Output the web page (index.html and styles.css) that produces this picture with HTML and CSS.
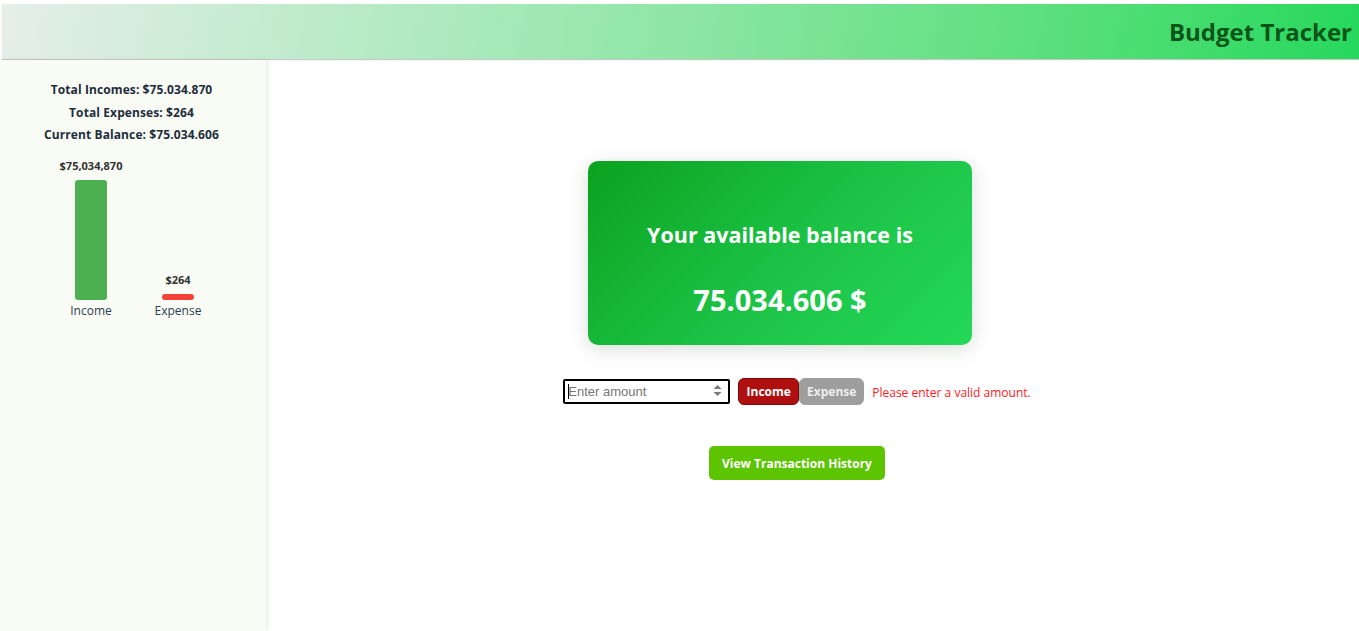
FILE: index.html
```html
<!DOCTYPE html>
<html lang="en">
<head>
<meta charset="utf-8">
<title>Budget Tracker</title>
<link rel="stylesheet" href="styles.css">
</head>
<body>
<header class="topbar">
  <h1 class="brand">Budget Tracker</h1>
</header>
<div class="layout">
  <aside class="sidebar">
    <div class="totals">
      <p>Total Incomes: $75.034.870</p>
      <p>Total Expenses: $264</p>
      <p>Current Balance: $75.034.606</p>
    </div>
    <div class="chart">
      <div class="col">
        <span class="val">$75,034,870</span>
        <div class="bar bar-income"></div>
        <span class="name">Income</span>
      </div>
      <div class="col">
        <span class="val">$264</span>
        <div class="bar bar-expense"></div>
        <span class="name">Expense</span>
      </div>
    </div>
  </aside>
  <main class="main">
    <section class="card">
      <h2 class="card-title">Your available balance is</h2>
      <p class="card-amount">75.034.606 $</p>
    </section>
    <div class="entry">
      <div class="field">
        <input class="amount" type="number" placeholder="Enter amount">
        <span class="caret"></span>
        <svg class="spin" width="9" height="13" viewBox="0 0 9 13" aria-hidden="true">
          <path d="M4.5 1 L8.5 5 L0.5 5 Z" fill="#7a7a7a"/>
          <path d="M0.5 8 L8.5 8 L4.5 12 Z" fill="#7a7a7a"/>
        </svg>
      </div>
      <div class="toggle">
        <button class="btn btn-income">Income</button>
        <button class="btn btn-expense">Expense</button>
      </div>
      <span class="error">Please enter a valid amount.</span>
    </div>
    <button class="history">View Transaction History</button>
  </main>
</div>
</body>
</html>
```
FILE: styles.css
```css
* { box-sizing: border-box; }
html, body { margin: 0; padding: 0; }
body {
  font-family: "Open Sans", "Noto Sans", sans-serif;
  background: #fff;
  overflow: hidden;
  height: 631px;
}
.topbar {
  margin: 4px 0 0 2px;
  height: 55px;
  background: linear-gradient(100deg, #e6eee9 0%, #a9e9bb 35%, #5fe07f 75%, #26d85c 100%);
  box-shadow: 0 1px 1px rgba(0,0,0,0.22);
  display: flex;
  align-items: center;
  justify-content: flex-end;
  padding-right: 7px;
}
.brand {
  margin: 0;
  font-size: 24px;
  font-weight: 700;
  color: #0b5519;
  line-height: 30px;
}
.layout {
  display: flex;
  height: 571px;
  margin-top: 1px;
}
.sidebar {
  width: 266px;
  flex: none;
  background: #f9fcf5;
  box-shadow: 2px 0 4px rgba(0,0,0,0.08);
  padding-top: 19px;
  position: relative;
  z-index: 1;
}
.totals { text-align: center; padding-right: 3px; }
.totals p {
  margin: 0;
  font-size: 12px;
  font-weight: 700;
  line-height: 22.5px;
  color: #1f2d3d;
  letter-spacing: 0.1px;
}
.chart {
  display: flex;
  justify-content: center;
  align-items: flex-end;
  gap: 23px;
  margin-top: 12px;
  padding-left: 3px;
}
.col {
  width: 64px;
  display: flex;
  flex-direction: column;
  align-items: center;
}
.val {
  font-size: 11px;
  font-weight: 700;
  line-height: 14px;
  color: #333;
  margin-bottom: 7px;
  white-space: nowrap;
}
.bar { width: 32px; border-radius: 3px; }
.bar-income { height: 120px; background: #4caf50; }
.bar-expense { height: 6px; background: #f44336; }
.name {
  font-size: 12px;
  line-height: 16px;
  color: #2c3e50;
  margin-top: 3px;
}
.main {
  flex: 1;
  display: flex;
  flex-direction: column;
  align-items: center;
  padding-top: 101px;
  padding-right: 31px;
}
.card {
  width: 384px;
  height: 184px;
  margin-right: 34px;
  border-radius: 10px;
  background: linear-gradient(135deg, #0ca21f 0%, #1bc144 50%, #24d858 100%);
  box-shadow: 0 4px 20px rgba(40,80,40,0.18);
  text-align: center;
  color: #fff;
  padding-top: 60px;
}
.card-title {
  margin: 0;
  font-size: 21.5px;
  font-weight: 700;
  line-height: 28px;
}
.card-amount {
  margin: 33px 0 0;
  font-size: 29px;
  font-weight: 700;
  line-height: 36px;
}
.entry {
  display: flex;
  align-items: center;
  margin-top: 33px;
  height: 27px;
}
.field {
  position: relative;
  margin-right: 8px;
}
.amount {
  display: block;
  width: 167px;
  height: 25px;
  border: 2px solid #000;
  border-radius: 2px;
  padding: 0 3px;
  font-family: "Liberation Sans", Arial, sans-serif;
  font-size: 13px;
  outline: none;
  background: #fff;
  -moz-appearance: textfield;
}
.amount::-webkit-inner-spin-button,
.amount::-webkit-outer-spin-button { -webkit-appearance: none; margin: 0; }
.amount::placeholder { color: #757575; }
.caret {
  position: absolute;
  left: 5px;
  top: 5px;
  width: 1px;
  height: 15px;
  background: #000;
}
.spin {
  position: absolute;
  right: 8px;
  top: 5px;
}
.toggle { display: flex; }
.btn {
  height: 27px;
  border-radius: 6px;
  font-family: "Open Sans", sans-serif;
  font-size: 12px;
  font-weight: 700;
  padding: 0;
  cursor: pointer;
}
.btn-income {
  width: 61px;
  background: #b00f0f;
  color: #fff;
  border: 1px solid #7d0a0a;
}
.btn-expense {
  width: 65px;
  background: #9e9e9e;
  color: #eeeeee;
  border: 1px solid #9e9e9e;
}
.error {
  margin-left: 8px;
  font-size: 12px;
  color: #ff1a1a;
  white-space: nowrap;
  padding-top: 2px;
}
.history {
  margin-top: 41px;
  width: 176px;
  height: 34px;
  border: none;
  border-radius: 5px;
  background: #5cc400;
  color: #fff;
  font-family: "Open Sans", sans-serif;
  font-size: 12px;
  font-weight: 700;
  cursor: pointer;
}
```
